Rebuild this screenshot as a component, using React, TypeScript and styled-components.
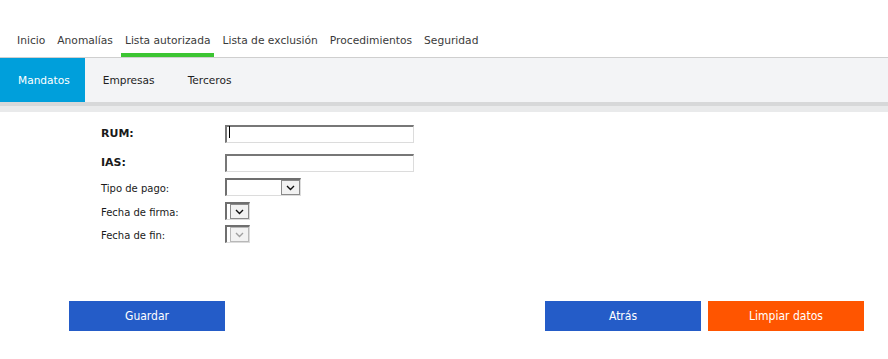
import React from "react";
import styled, { createGlobalStyle } from "styled-components";

const Global = createGlobalStyle`
  html, body { margin: 0; padding: 0; background: #ffffff; }
  body { font-family: "DejaVu Sans", Verdana, sans-serif; color: #222; }
  * { box-sizing: border-box; }
`;

const Page = styled.div`
  width: 888px;
  height: 359px;
  display: flex;
  flex-direction: column;
  background: #fff;
`;

const TopNav = styled.nav`
  display: flex;
  gap: 4px;
  padding: 34px 0 0 13px;
  border-bottom: 1px solid #cfcfcf;
`;

const NavItem = styled.div<{ $active?: boolean }>`
  font-size: 10.7px;
  line-height: 14px;
  padding: 0 4px 5px;
  color: #3a3a3a;
  border-bottom: 4px solid ${(p) => (p.$active ? "#3cc532" : "transparent")};
  white-space: nowrap;
`;

const TabBar = styled.div`
  display: flex;
  height: 48px;
  background: #f3f4f6;
  border-bottom: 4px solid #d7d8d9;
`;

const Tab = styled.div<{ $active?: boolean }>`
  padding: 0 15px 0 18px;
  font-size: 10.6px;
  line-height: 44px;
  color: ${(p) => (p.$active ? "#ffffff" : "#1e1e1e")};
  background: ${(p) => (p.$active ? "#009fdb" : "transparent")};
`;

const Band = styled.div`
  height: 6px;
  background: #e9eaeb;
`;

const Form = styled.div`
  display: flex;
  flex-direction: column;
  padding: 11px 0 0 101px;
`;

const Row = styled.div<{ $space: number }>`
  display: grid;
  grid-template-columns: 124px auto;
  align-items: center;
  margin-bottom: ${(p) => p.$space}px;
`;

const Label = styled.div<{ $bold?: boolean }>`
  font-size: ${(p) => (p.$bold ? "11px" : "10px")};
  font-weight: ${(p) => (p.$bold ? 700 : 400)};
  color: #1a1a1a;
  padding-top: 2px;
`;

const FieldWrap = styled.div`
  position: relative;
  width: 189px;
  height: 18px;
`;

const TextBox = styled.input`
  width: 100%;
  height: 100%;
  margin: 0;
  padding: 0 2px;
  background: #fff;
  border-style: solid;
  border-width: 2px 1px 1px 2px;
  border-color: #777 #dcdcdc #dcdcdc #777;
  outline: none;
  font-size: 11px;
`;

const Caret = styled.span`
  position: absolute;
  left: 4px;
  top: 3px;
  width: 1px;
  height: 12px;
  background: #000;
`;

const SelectBox = styled.div<{ $w: number }>`
  width: ${(p) => p.$w}px;
  height: 18px;
  display: flex;
  justify-content: flex-end;
  background: #fff;
  border-style: solid;
  border-width: 2px 1px 1px 2px;
  border-color: #6f6f6f #dcdcdc #dcdcdc #6f6f6f;
`;

const DropButton = styled.div<{ $disabled?: boolean }>`
  width: 19px;
  height: 100%;
  display: flex;
  align-items: center;
  justify-content: center;
  background: #f2f2f2;
  border: 1px solid ${(p) => (p.$disabled ? "#b8b8b8" : "#8a8a8a")};
  color: ${(p) => (p.$disabled ? "#a0a0a0" : "#111")};
`;

const Chevron = () => (
  <svg width="9" height="6" viewBox="0 0 9 6">
    <path d="M1 1 L4.5 4.5 L8 1" fill="none" stroke="currentColor" strokeWidth="1.4" />
  </svg>
);

const Select = ({ w, disabled }: { w: number; disabled?: boolean }) => (
  <SelectBox $w={w}>
    <DropButton $disabled={disabled}>
      <Chevron />
    </DropButton>
  </SelectBox>
);

const Actions = styled.div`
  display: flex;
  gap: 7px;
  margin-top: 58px;
  padding: 0 24px 0 69px;
`;

const Spacer = styled.div`
  flex: 1;
`;

const Button = styled.button<{ $tone: "blue" | "orange" }>`
  width: 156px;
  height: 30px;
  border: none;
  margin: 0;
  padding: 0;
  background: ${(p) => (p.$tone === "blue" ? "#245cc8" : "#ff5500")};
  color: #fff;
  font-family: "DejaVu Sans Condensed", "DejaVu Sans", sans-serif;
  font-stretch: condensed;
  font-size: 12px;
`;

export default function App() {
  return (
    <Page>
      <Global />
      <TopNav>
        <NavItem>Inicio</NavItem>
        <NavItem>Anomalías</NavItem>
        <NavItem $active>Lista autorizada</NavItem>
        <NavItem>Lista de exclusión</NavItem>
        <NavItem>Procedimientos</NavItem>
        <NavItem>Seguridad</NavItem>
      </TopNav>
      <TabBar>
        <Tab $active>Mandatos</Tab>
        <Tab>Empresas</Tab>
        <Tab>Terceros</Tab>
      </TabBar>
      <Band />
      <Form>
        <Row $space={11}>
          <Label $bold>RUM:</Label>
          <FieldWrap>
            <TextBox type="text" />
            <Caret />
          </FieldWrap>
        </Row>
        <Row $space={8}>
          <Label $bold>IAS:</Label>
          <FieldWrap>
            <TextBox type="text" />
          </FieldWrap>
        </Row>
        <Row $space={6}>
          <Label>Tipo de pago:</Label>
          <Select w={76} />
        </Row>
        <Row $space={5}>
          <Label>Fecha de firma:</Label>
          <Select w={25} />
        </Row>
        <Row $space={0}>
          <Label>Fecha de fin:</Label>
          <Select w={25} disabled />
        </Row>
      </Form>
      <Actions>
        <Button $tone="blue">Guardar</Button>
        <Spacer />
        <Button $tone="blue">Atrás</Button>
        <Button $tone="orange">Limpiar datos</Button>
      </Actions>
    </Page>
  );
}
